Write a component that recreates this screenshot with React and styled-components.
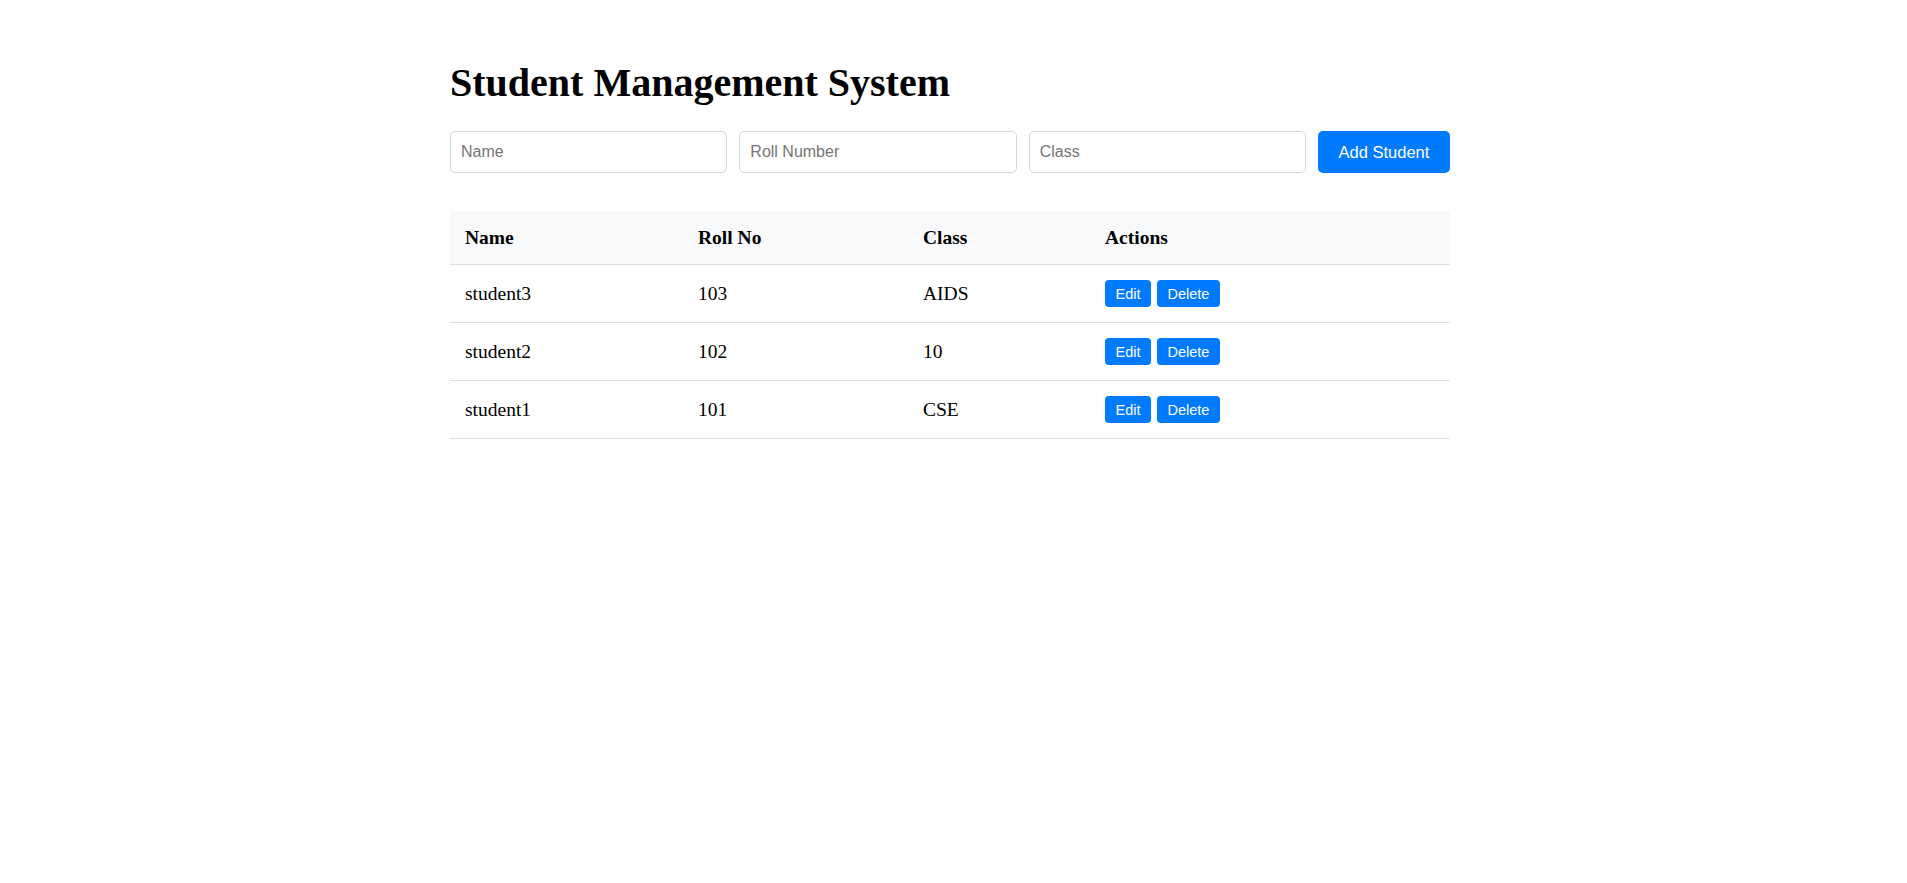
import React, { useState } from "react";
import styled, { createGlobalStyle } from "styled-components";

const GlobalStyle = createGlobalStyle`
  body {
    margin: 0;
    background: #ffffff;
    font-family: "Liberation Serif", "Times New Roman", serif;
    color: #000000;
  }
`;

const initialStudents = [
  { id: 3, name: "student3", roll: "103", className: "AIDS" },
  { id: 2, name: "student2", roll: "102", className: "10" },
  { id: 1, name: "student1", roll: "101", className: "CSE" },
];

const App = () => {
  const [students] = useState(initialStudents);
  const [form, setForm] = useState({ name: "", roll: "", className: "" });

  const handleChange = (e) => {
    setForm({ ...form, [e.target.name]: e.target.value });
  };

  return (
    <>
      <GlobalStyle />
      <Page>
        <Container>
          <Title>Student Management System</Title>
          <Form onSubmit={(e) => e.preventDefault()}>
            <Input
              name="name"
              placeholder="Name"
              value={form.name}
              onChange={handleChange}
            />
            <Input
              name="roll"
              placeholder="Roll Number"
              value={form.roll}
              onChange={handleChange}
            />
            <Input
              name="className"
              placeholder="Class"
              value={form.className}
              onChange={handleChange}
            />
            <AddButton type="submit">Add Student</AddButton>
          </Form>

          <Table>
            <colgroup>
              <col style={{ width: "233px" }} />
              <col style={{ width: "225px" }} />
              <col style={{ width: "182px" }} />
              <col />
            </colgroup>
            <thead>
              <tr>
                <Th>Name</Th>
                <Th>Roll No</Th>
                <Th>Class</Th>
                <Th>Actions</Th>
              </tr>
            </thead>
            <tbody>
              {students.map((s) => (
                <tr key={s.id}>
                  <Td>{s.name}</Td>
                  <Td>{s.roll}</Td>
                  <Td>{s.className}</Td>
                  <Td>
                    <Actions>
                      <SmallButton>Edit</SmallButton>
                      <SmallButton>Delete</SmallButton>
                    </Actions>
                  </Td>
                </tr>
              ))}
            </tbody>
          </Table>
        </Container>
      </Page>
    </>
  );
};

const Page = styled.div`
  display: flex;
  justify-content: center;
  padding: 59px 7px 0 0;
`;

const Container = styled.div`
  width: 1000px;
`;

const Title = styled.h1`
  margin: 0;
  font-size: 40px;
  font-weight: bold;
  line-height: normal;
`;

const Form = styled.form`
  display: flex;
  gap: 12px;
  margin-top: 25px;
`;

const Input = styled.input`
  flex: 1;
  min-width: 0;
  height: 42px;
  box-sizing: border-box;
  padding: 0 10px;
  font-family: "Liberation Sans", Arial, sans-serif;
  font-size: 16px;
  border: 1px solid #d6d6d6;
  border-radius: 5px;
  outline: none;
  &::placeholder {
    color: #757575;
  }
`;

const AddButton = styled.button`
  width: 132px;
  height: 42px;
  padding: 0;
  flex-shrink: 0;
  background: #007bff;
  color: #ffffff;
  border: none;
  border-radius: 5px;
  font-family: "Liberation Sans", Arial, sans-serif;
  font-size: 16.5px;
  cursor: pointer;
`;

const Table = styled.table`
  width: 100%;
  margin-top: 38px;
  border-collapse: collapse;
  table-layout: fixed;
  font-size: 19.5px;
`;

const Th = styled.th`
  text-align: left;
  padding: 15px;
  background: #f8f9fa;
  border-bottom: 1px solid #dddddd;
  font-weight: bold;
  line-height: 23px;
`;

const Td = styled.td`
  padding: 15px;
  border-bottom: 1px solid #dddddd;
  line-height: 23px;
  vertical-align: middle;
`;

const Actions = styled.div`
  display: flex;
  gap: 6px;
`;

const SmallButton = styled.button`
  height: 27px;
  padding: 0 10.5px;
  background: #007bff;
  color: #ffffff;
  border: none;
  border-radius: 4px;
  font-family: "Liberation Sans", Arial, sans-serif;
  font-size: 14.5px;
  cursor: pointer;
`;

export default App;
